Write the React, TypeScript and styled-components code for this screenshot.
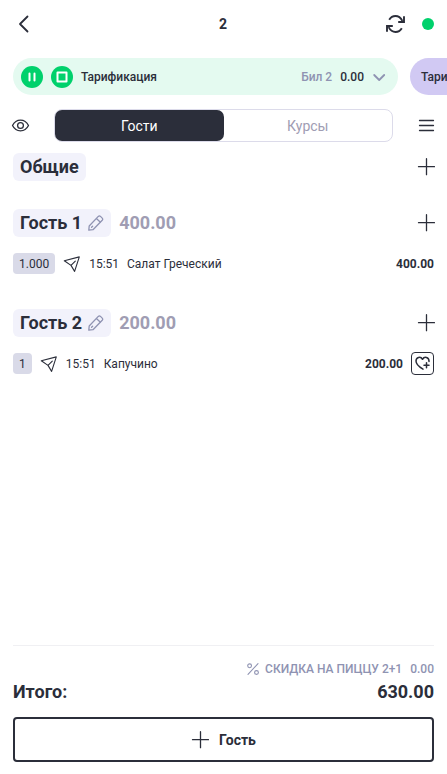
import React from "react";
import styled, { createGlobalStyle } from "styled-components";

const ink = "#2b2e3a";
const muted = "#8f93b2";
const soft = "#a09db3";
const green = "#00d16c";

const GlobalStyle = createGlobalStyle`
  *, *::before, *::after { box-sizing: border-box; }
  body { margin: 0; background: #fff; }
  button, input { font: inherit; color: inherit; }
  svg { display: block; flex: none; }
`;

const Page = styled.div`
  display: flex;
  flex-direction: column;
  min-height: 100vh;
  overflow-x: hidden;
  color: ${ink};
  font-family: Roboto, sans-serif;
  font-size: 12px;
  line-height: 16px;
`;

const Header = styled.header`
  display: grid;
  grid-template-columns: 1fr auto 1fr;
  align-items: center;
  height: 48px;
  padding: 0 13px 0 12px;
`;

const Title = styled.h1`
  margin: 0;
  font-size: 14px;
  font-weight: 700;
`;

const HeaderActions = styled.div`
  display: flex;
  justify-content: flex-end;
  align-items: center;
  gap: 16px;
`;

const IconButton = styled.button`
  display: flex;
  flex: none;
  align-items: center;
  justify-content: center;
  justify-self: start;
  padding: 0;
  border: 0;
  background: none;
  cursor: pointer;
`;

const StatusDot = styled.span`
  width: 12px;
  height: 12px;
  border-radius: 50%;
  background: ${green};
`;

const Tariffs = styled.section`
  display: flex;
  gap: 12px;
  margin-top: 10px;
  padding-left: 13px;
  overflow-x: auto;
  scrollbar-width: none;
`;

const Tariff = styled.div<{ $paused?: boolean }>`
  display: flex;
  flex: 0 0 calc(100% - 49px);
  align-items: center;
  gap: 8px;
  height: 37px;
  padding: 0 ${(p) => (p.$paused ? 11 : 12)}px 0 ${(p) => (p.$paused ? 11 : 8)}px;
  border-radius: 19px;
  background: ${(p) => (p.$paused ? "#d1c9f3" : "#e4faf0")};
`;

const RoundButton = styled(IconButton)`
  width: 22px;
  height: 22px;
  border-radius: 50%;
  background: ${green};
  color: #fff;
`;

const TariffName = styled.span`
  flex: 1;
  font-weight: 500;
`;

const Bill = styled.span`
  color: ${muted};
  font-weight: 500;
`;

const BillSum = styled.span`
  font-weight: 500;
`;

const ViewBar = styled.nav`
  display: flex;
  align-items: center;
  margin-top: 14px;
  padding: 0 12px 0 11px;
`;

const Tabs = styled.div`
  display: grid;
  flex: 1;
  grid-template-columns: 1fr 1fr;
  height: 33px;
  margin: 0 25px 0 24px;
  border: 1px solid #dcdbea;
  border-radius: 8px;
`;

const Tab = styled.button<{ $active?: boolean }>`
  padding: 0;
  border: 0;
  border-radius: 7px;
  background: ${(p) => (p.$active ? ink : "transparent")};
  color: ${(p) => (p.$active ? "#fff" : soft)};
  font-size: 14px;
  cursor: pointer;
`;

const Guests = styled.main`
  display: flex;
  flex: 1;
  flex-direction: column;
  gap: 28px;
  padding: 11px 12px 20px 13px;
`;

const Group = styled.section`
  display: flex;
  flex-direction: column;
`;

const GroupHead = styled.div`
  display: flex;
  align-items: center;
  gap: 8px;
  height: 28px;
  font-size: 18px;
`;

const Chip = styled.div`
  display: flex;
  align-items: center;
  gap: 6px;
  height: 28px;
  padding: 0 7px;
  border-radius: 6px;
  background: #f2f2fb;
`;

const GroupName = styled.h2`
  margin: 0;
  font-size: 18px;
  font-weight: 700;
  line-height: 22px;
`;

const GroupSum = styled.span`
  color: ${soft};
  font-weight: 700;
  line-height: 22px;
`;

const Spacer = styled.span`
  flex: 1;
`;

const Items = styled.div`
  display: flex;
  flex-direction: column;
  padding: 14px 0 5px;
`;

const Item = styled.div`
  display: flex;
  align-items: center;
  gap: 8px;
  height: 25px;
  padding-right: 1px;
`;

const Quantity = styled.span`
  height: 21px;
  padding: 0 6px;
  border-radius: 4px;
  background: #d9dae8;
  line-height: 22px;
`;

const ItemName = styled.span`
  flex: 1;
`;

const Price = styled.span`
  font-weight: 700;
`;

const LoyaltyButton = styled(IconButton)`
  width: 23px;
  height: 23px;
  border: 1px solid ${ink};
  border-radius: 4px;
`;

const Footer = styled.footer`
  display: flex;
  flex-direction: column;
  margin: 0 13px 12px;
  padding-top: 14px;
  border-top: 1px solid #f0f0f3;
`;

const Discount = styled.div`
  display: flex;
  justify-content: flex-end;
  align-items: center;
  gap: 6px;
  height: 18px;
  color: ${muted};
  font-weight: 500;
`;

const DiscountSum = styled.span`
  margin-left: 2px;
`;

const Total = styled.div`
  display: flex;
  justify-content: space-between;
  margin: 3px 0 14px;
  font-size: 18px;
  font-weight: 700;
  line-height: 22px;
`;

const AddGuest = styled.button`
  display: flex;
  align-items: center;
  justify-content: center;
  gap: 10px;
  height: 45px;
  border: 2px solid ${ink};
  border-radius: 4px;
  background: #fff;
  font-size: 14px;
  font-weight: 700;
  cursor: pointer;
`;

const stroke = { fill: "none", stroke: "currentColor", strokeLinecap: "round", strokeLinejoin: "round" } as const;

const BackIcon = () => (
  <svg width="24" height="24" viewBox="0 0 24 24" {...stroke} strokeWidth="1.8">
    <path d="M15.5 4.500 8 12l7.500 7.500" />
  </svg>
);

const RefreshIcon = () => (
  <svg width="21" height="20" viewBox="0 0 21 20" {...stroke} strokeLinecap="butt" strokeLinejoin="miter" strokeWidth="1.9">
    <path d="M4.200 5.800C5.600 3.400 7.800 2 10.500 2c3 0 5.200 1.700 6.900 4.900M19 2.200V8h-5.800M16.800 14.200C15.400 16.600 13.200 18 10.500 18c-3 0-5.200-1.700-6.900-4.900M2 17.800V12h5.800" />
  </svg>
);

const PauseIcon = () => (
  <svg width="22" height="22" viewBox="0 0 22 22" {...stroke} strokeWidth="2">
    <path d="M8.500 7.500v7M13.500 7.500v7" />
  </svg>
);

const StopIcon = () => (
  <svg width="22" height="22" viewBox="0 0 22 22" {...stroke} strokeWidth="2">
    <path d="M6.500 6.500h9v9h-9z" />
  </svg>
);

const ChevronIcon = () => (
  <svg width="14" height="12" viewBox="0 0 14 12" {...stroke} stroke={muted} strokeWidth="1.800">
    <path d="m2.200 4 5 5 5-5" />
  </svg>
);

const EyeIcon = () => (
  <svg width="19" height="16" viewBox="0 0 19 16" {...stroke} strokeWidth="1.300">
    <path d="M1.500 7.500C3.300 4 6 2.200 9.500 2.200s6.200 1.800 8 5.300c-1.800 3.500-4.500 5.300-8 5.300S3.300 11 1.500 7.500Z" />
    <circle cx="9.500" cy="7.500" r="2.900" />
  </svg>
);

const MenuIcon = () => (
  <svg width="17" height="16" viewBox="0 0 17 16" {...stroke} strokeWidth="1.300">
    <path d="M1.500 2.500h14M1.500 7.500h14M1.500 12.500h14" />
  </svg>
);

const PlusIcon = () => (
  <svg width="18" height="18" viewBox="0 0 18 18" {...stroke} strokeWidth="1.300">
    <path d="M9.500 .7v16M1.500 8.700h16" />
  </svg>
);

const PencilIcon = () => (
  <svg width="16" height="18" viewBox="0 0 16 18" {...stroke} stroke={muted} strokeWidth="1.300">
    <path d="M1.200 12 10.300 2.400q1.100-1 2.200 0l1.700 1.700q1 1.100 0 2.200L5 15.700l-4.200.5ZM8.400 4.500l4 3.800M3.600 13.200l1-1" />
  </svg>
);

const SendIcon = () => (
  <svg width="18" height="18" viewBox="0 0 18 18" {...stroke} strokeWidth="1.100">
    <path d="M16.300 1.900 1.300 5.800l6.700 4.600 3.600 6ZM8 10.400l4.300-4.300" />
  </svg>
);

const HeartPlusIcon = () => (
  <svg width="17" height="17" viewBox="0 0 17 17" {...stroke} strokeWidth="1.500">
    <path d="M9 14.200C5.200 11.900 2 9.300 2 6c0-3.900 4.700-5 6.500-1.700C10.300 1 15 2.100 15 6v.5M12.500 7.800v5M10 10.300h5" />
  </svg>
);

const PercentIcon = () => (
  <svg width="12" height="12" viewBox="0 0 12 12" {...stroke} strokeWidth="1.100">
    <path d="m1 11.300 10-10.600" />
    <circle cx="2.600" cy="2.800" r="1.900" />
    <circle cx="9.500" cy="9.500" r="1.900" />
  </svg>
);

type OrderItem = { quantity: string; time: string; name: string; price: string; loyalty?: boolean };
type GuestGroup = { name: string; sum?: string; items: OrderItem[] };

const groups: GuestGroup[] = [
  { name: "Общие", items: [] },
  { name: "Гость 1", sum: "400.00", items: [{ quantity: "1.000", time: "15:51", name: "Салат Греческий", price: "400.00" }] },
  { name: "Гость 2", sum: "200.00", items: [{ quantity: "1", time: "15:51", name: "Капучино", price: "200.00", loyalty: true }] },
];

export default function App() {
  const [tab, setTab] = React.useState("Гости");
  return (
    <>
      <GlobalStyle />
      <Page>
        <Header>
          <IconButton aria-label="Назад"><BackIcon /></IconButton>
          <Title>2</Title>
          <HeaderActions>
            <IconButton aria-label="Обновить"><RefreshIcon /></IconButton>
            <StatusDot />
          </HeaderActions>
        </Header>
        <Tariffs>
          <Tariff>
            <RoundButton aria-label="Пауза"><PauseIcon /></RoundButton>
            <RoundButton aria-label="Стоп"><StopIcon /></RoundButton>
            <TariffName>Тарификация</TariffName>
            <Bill>Бил 2</Bill>
            <BillSum>0.00</BillSum>
            <IconButton aria-label="Развернуть"><ChevronIcon /></IconButton>
          </Tariff>
          <Tariff $paused>
            <TariffName>Тарификация</TariffName>
          </Tariff>
        </Tariffs>
        <ViewBar>
          <IconButton aria-label="Показать"><EyeIcon /></IconButton>
          <Tabs>
            {["Гости", "Курсы"].map((name) => (
              <Tab key={name} $active={tab === name} aria-pressed={tab === name} onClick={() => setTab(name)}>{name}</Tab>
            ))}
          </Tabs>
          <IconButton aria-label="Меню"><MenuIcon /></IconButton>
        </ViewBar>
        <Guests>
          {groups.map((group) => (
            <Group key={group.name}>
              <GroupHead>
                <Chip>
                  <GroupName>{group.name}</GroupName>
                  {group.sum && <IconButton aria-label="Переименовать"><PencilIcon /></IconButton>}
                </Chip>
                {group.sum && <GroupSum>{group.sum}</GroupSum>}
                <Spacer />
                <IconButton aria-label="Добавить блюдо"><PlusIcon /></IconButton>
              </GroupHead>
              {group.items.length > 0 && (
                <Items>
                  {group.items.map((item) => (
                    <Item key={item.name}>
                      <Quantity>{item.quantity}</Quantity>
                      <SendIcon />
                      <span>{item.time}</span>
                      <ItemName>{item.name}</ItemName>
                      <Price>{item.price}</Price>
                      {item.loyalty && <LoyaltyButton aria-label="Лояльность"><HeartPlusIcon /></LoyaltyButton>}
                    </Item>
                  ))}
                </Items>
              )}
            </Group>
          ))}
        </Guests>
        <Footer>
          <Discount>
            <PercentIcon />
            <span>СКИДКА НА ПИЦЦУ 2+1</span>
            <DiscountSum>0.00</DiscountSum>
          </Discount>
          <Total>
            <span>Итого:</span>
            <span>630.00</span>
          </Total>
          <AddGuest><PlusIcon />Гость</AddGuest>
        </Footer>
      </Page>
    </>
  );
}
